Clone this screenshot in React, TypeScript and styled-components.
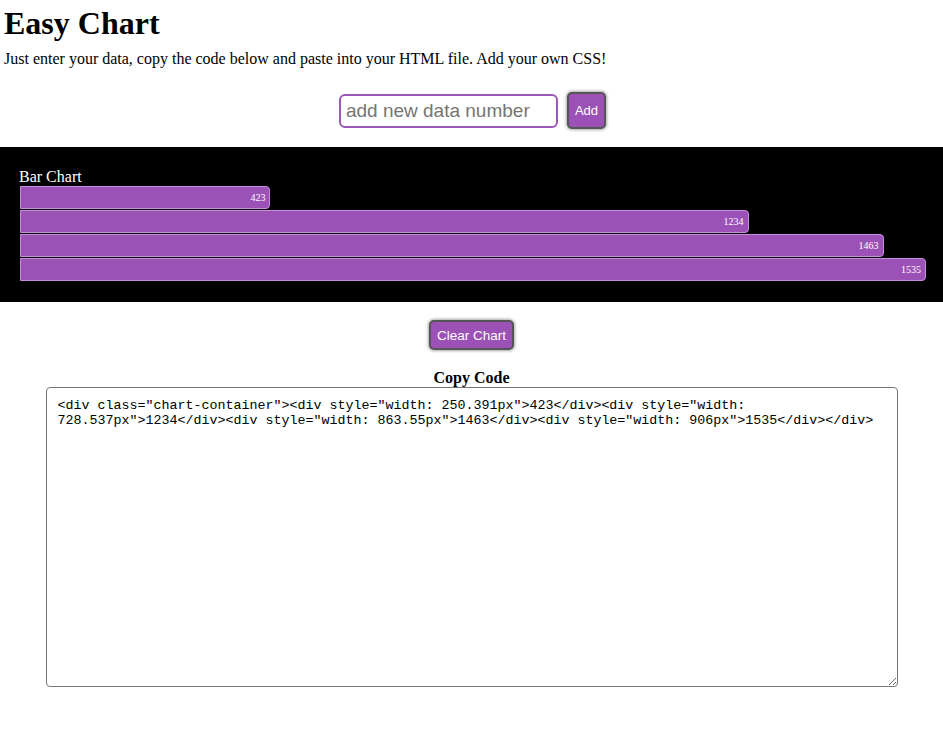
import React, { useState } from "react";
import styled, { createGlobalStyle } from "styled-components";

const GlobalStyle = createGlobalStyle`
  html, body {
    margin: 0;
    padding: 0;
    background: #ffffff;
    font-family: "Liberation Serif", "Times New Roman", serif;
    color: #000;
  }
`;

const Page = styled.div`
  display: flex;
  flex-direction: column;
`;

const Header = styled.header`
  padding: 5px 4px 0;
`;

const Title = styled.h1`
  margin: 0 0 8px;
  font-size: 32px;
  font-weight: bold;
  line-height: normal;
`;

const Intro = styled.p`
  margin: 0;
  font-size: 16px;
  line-height: normal;
`;

const Form = styled.form`
  display: flex;
  justify-content: center;
  align-items: center;
  gap: 9px;
  margin: 24px 0 18px;
  padding-left: 2px;
`;

const Input = styled.input`
  box-sizing: border-box;
  width: 219px;
  height: 34px;
  padding: 0 5px;
  border: 2px solid #9b59b6;
  border-radius: 6px;
  font-family: "Liberation Sans", Arial, sans-serif;
  font-size: 19px;
  outline: none;
  &::placeholder {
    color: #757575;
  }
`;

const PurpleButton = styled.button<{ $size: "small" | "normal" }>`
  box-sizing: border-box;
  height: ${(p) => (p.$size === "small" ? "37px" : "30px")};
  padding: 0 6px;
  background: #9b51b5;
  color: #ffffff;
  border: 2px solid #555;
  border-radius: 5px;
  box-shadow: 0 0 3px 1px rgba(0, 0, 0, 0.35);
  font-family: "Liberation Sans", Arial, sans-serif;
  font-size: ${(p) => (p.$size === "small" ? "13px" : "13.5px")};
  cursor: pointer;
`;

const ChartSection = styled.section`
  background: #000;
  padding: 21px 17px 21px 20px;
  display: flex;
  flex-direction: column;
`;

const ChartTitle = styled.div`
  color: #fff;
  font-size: 16px;
  line-height: normal;
  margin-left: -1px;
`;

const ChartContainer = styled.div`
  display: flex;
  flex-direction: column;
  gap: 1px;
`;

const Bar = styled.div`
  box-sizing: border-box;
  height: 23px;
  background: #9b51b5;
  border: 1px solid #c48fd8;
  border-radius: 0 4px 4px 0;
  display: flex;
  align-items: center;
  justify-content: flex-end;
  padding-right: 4px;
  color: #fff;
  font-size: 10px;
`;

const Controls = styled.div`
  display: flex;
  justify-content: center;
  margin: 18px 0 19px;
`;

const CodeSection = styled.div`
  display: flex;
  flex-direction: column;
  align-items: center;
`;

const CodeTitle = styled.div`
  font-size: 16px;
  font-weight: bold;
  line-height: normal;
`;

const CodeArea = styled.textarea`
  box-sizing: border-box;
  width: 852px;
  height: 300px;
  padding: 10px 11px;
  border: 1px solid #767676;
  border-radius: 4px;
  font-family: "Liberation Mono", "Courier New", monospace;
  font-size: 13.333px;
  line-height: 15px;
  color: #000;
  resize: both;
  outline: none;
`;

type Item = { value: number; width: number };

const initial: Item[] = [
  { value: 423, width: 250.391 },
  { value: 1234, width: 728.537 },
  { value: 1463, width: 863.55 },
  { value: 1535, width: 906 },
];
const MAX = 906;

export default function App() {
  const [data, setData] = useState<Item[]>(initial);
  const [value, setValue] = useState("");

  const code =
    '<div class="chart-container">' +
    data.map((d) => `<div style="width: ${d.width}px">${d.value}</div>`).join("") +
    "</div>";

  return (
    <Page>
      <GlobalStyle />
      <Header>
        <Title>Easy Chart</Title>
        <Intro>
          Just enter your data, copy the code below and paste into your HTML
          file. Add your own CSS!
        </Intro>
      </Header>
      <Form
        onSubmit={(e) => {
          e.preventDefault();
          const n = parseFloat(value);
          if (!isNaN(n)) {
            const values = [...data.map((d) => d.value), n];
            const max = Math.max(...values, 1);
            setData(
              values.map((v) => ({
                value: v,
                width: Math.round((v / max) * MAX * 1000) / 1000,
              }))
            );
          }
          setValue("");
        }}
      >
        <Input
          placeholder="add new data number"
          value={value}
          onChange={(e) => setValue(e.target.value)}
        />
        <PurpleButton $size="small" type="submit">
          Add
        </PurpleButton>
      </Form>
      <ChartSection>
        <ChartTitle>Bar Chart</ChartTitle>
        <ChartContainer>
          {data.map((d, i) => (
            <Bar key={i} style={{ width: `${d.width}px` }}>
              {d.value}
            </Bar>
          ))}
        </ChartContainer>
      </ChartSection>
      <Controls>
        <PurpleButton $size="normal" type="button" onClick={() => setData([])}>
          Clear Chart
        </PurpleButton>
      </Controls>
      <CodeSection>
        <CodeTitle>Copy Code</CodeTitle>
        <CodeArea readOnly value={code} />
      </CodeSection>
    </Page>
  );
}
